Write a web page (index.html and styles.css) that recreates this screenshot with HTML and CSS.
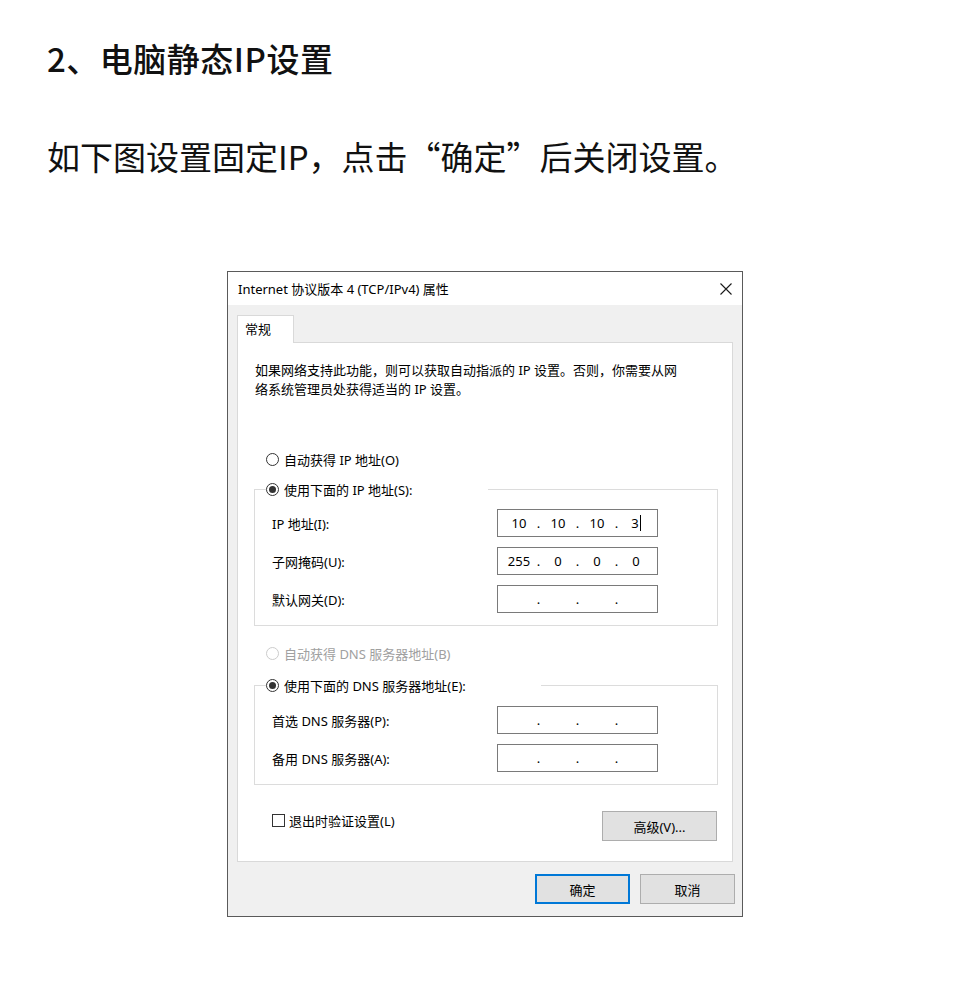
FILE: index.html
```html
<!DOCTYPE html>
<html lang="zh-CN">
<head>
    <meta charset="UTF-8">
    <meta name="viewport" content="width=device-width, initial-scale=1.0">
    <title>电脑静态IP设置</title>
    <link rel="stylesheet" href="styles.css">
</head>
<body>
    <div class="article">
        <h1>2、电脑静态IP设置</h1>
        <p class="lead">如下图设置固定IP，点击“确定”后关闭设置。</p>

        <div class="dialog">
            <div class="titlebar">
                <span class="title">Internet 协议版本 4 (TCP/IPv4) 属性</span>
                <svg class="close" width="12" height="12" viewBox="0 0 12 12">
                    <path d="M0.5 0.5 L11.5 11.5 M11.5 0.5 L0.5 11.5" stroke="#1a1a1a" stroke-width="1.1" fill="none"/>
                </svg>
            </div>
            <div class="dlg-body">
                <div class="tabs">
                    <div class="tab">常规</div>
                </div>
                <div class="panel">
                    <p class="desc">如果网络支持此功能，则可以获取自动指派的 IP 设置。否则，你需要从网<br>络系统管理员处获得适当的 IP 设置。</p>

                    <div class="radio-row first"><span class="radio"></span>自动获得 IP 地址(O)</div>
                    <fieldset class="group">
                        <legend class="legend-ip"><span class="legend-inner"><span class="radio checked"></span>使用下面的 IP 地址(S):</span></legend>
                        <div class="field-row">
                            <span class="field-label">IP 地址(I):</span>
                            <div class="ip-box">
                                <span class="oct">10</span><span class="dot">.</span><span class="oct">10</span><span class="dot">.</span><span class="oct">10</span><span class="dot">.</span><span class="oct"><span class="caret">3</span></span>
                            </div>
                        </div>
                        <div class="field-row">
                            <span class="field-label">子网掩码(U):</span>
                            <div class="ip-box">
                                <span class="oct">255</span><span class="dot">.</span><span class="oct">0</span><span class="dot">.</span><span class="oct">0</span><span class="dot">.</span><span class="oct">0</span>
                            </div>
                        </div>
                        <div class="field-row">
                            <span class="field-label">默认网关(D):</span>
                            <div class="ip-box">
                                <span class="oct"></span><span class="dot">.</span><span class="oct"></span><span class="dot">.</span><span class="oct"></span><span class="dot">.</span><span class="oct"></span>
                            </div>
                        </div>
                    </fieldset>

                    <div class="radio-row disabled"><span class="radio"></span>自动获得 DNS 服务器地址(B)</div>
                    <fieldset class="group group-dns">
                        <legend class="legend-dns"><span class="legend-inner"><span class="radio checked"></span>使用下面的 DNS 服务器地址(E):</span></legend>
                        <div class="field-row">
                            <span class="field-label">首选 DNS 服务器(P):</span>
                            <div class="ip-box">
                                <span class="oct"></span><span class="dot">.</span><span class="oct"></span><span class="dot">.</span><span class="oct"></span><span class="dot">.</span><span class="oct"></span>
                            </div>
                        </div>
                        <div class="field-row">
                            <span class="field-label">备用 DNS 服务器(A):</span>
                            <div class="ip-box">
                                <span class="oct"></span><span class="dot">.</span><span class="oct"></span><span class="dot">.</span><span class="oct"></span><span class="dot">.</span><span class="oct"></span>
                            </div>
                        </div>
                    </fieldset>

                    <div class="options">
                        <div class="check"><span class="box"></span>退出时验证设置(L)</div>
                        <button class="btn btn-adv">高级(V)...</button>
                    </div>
                </div>
                <div class="actions">
                    <button class="btn btn-ok">确定</button>
                    <button class="btn">取消</button>
                </div>
            </div>
        </div>
    </div>
</body>
</html>
```

FILE: styles.css
```css
body {
    margin: 0;
    background: #ffffff;
    color: #111111;
    font-family: "Noto Sans CJK SC", sans-serif;
}
.article {
    padding: 42px 47px 60px;
}
h1 {
    margin: 0;
    font-size: 33px;
    line-height: 33px;
    font-weight: 500;
    letter-spacing: 0.5px;
}
.lead {
    margin: 65px 0 0;
    font-size: 33px;
    line-height: 33px;
}

/* windows style dialog */
.dialog {
    margin: 98px 0 0 180px;
    width: 514px;
    border: 1px solid #5a5a5a;
    background: #f0f0f0;
    font-family: "Noto Sans", "Noto Sans CJK SC", sans-serif;
    font-size: 13px;
    color: #000000;
}
.titlebar {
    height: 33px;
    background: #ffffff;
    display: flex;
    align-items: center;
    justify-content: space-between;
    padding: 0 10px;
}
.dlg-body {
    padding: 10px 9px 12px;
}
.tabs {
    display: flex;
}
.tab {
    position: relative;
    box-sizing: border-box;
    width: 57px;
    height: 28px;
    margin-bottom: -1px;
    padding-left: 7px;
    line-height: 27px;
    background: #ffffff;
    border: 1px solid #d9d9d9;
    border-bottom: none;
}
.panel {
    background: #ffffff;
    border: 1px solid #d9d9d9;
    padding: 18px 14px 20px 16px;
}
.desc {
    margin: 0 0 0 1px;
    line-height: 19px;
}
.radio-row {
    display: flex;
    align-items: center;
    height: 19px;
    margin-left: 12px;
}
.radio-row.first {
    margin-top: 51px;
}
.radio-row.disabled {
    margin-top: 18px;
    color: #a0a0a0;
}
.radio {
    box-sizing: border-box;
    width: 13px;
    height: 13px;
    margin-right: 5px;
    border: 1px solid #333333;
    border-radius: 50%;
    display: inline-flex;
    align-items: center;
    justify-content: center;
    background: #ffffff;
}
.radio-row.disabled .radio {
    border-color: #cccccc;
}
.radio.checked::after {
    content: "";
    width: 7px;
    height: 7px;
    border-radius: 50%;
    background: #333333;
}
.group {
    margin: 11px 0 0;
    padding: 10px 0 12px 17px;
    border: 1px solid #dcdcdc;
    min-width: 0;
}
.group-dns {
    margin-top: 13px;
    padding-top: 11px;
}
.group legend {
    padding: 0;
    margin-left: -6px;
    height: 19px;
}
.legend-ip {
    width: 222px;
}
.legend-dns {
    width: 275px;
}
.legend-inner {
    display: flex;
    align-items: center;
    height: 19px;
}
.field-row {
    display: flex;
    align-items: center;
    height: 28px;
}
.field-row + .field-row {
    margin-top: 10px;
}
.field-label {
    width: 225px;
}
.ip-box {
    box-sizing: border-box;
    width: 161px;
    height: 28px;
    padding-left: 6px;
    border: 1px solid #7a7a7a;
    display: flex;
    align-items: center;
    background: #ffffff;
}
.oct {
    width: 30px;
    text-align: center;
}
.dot {
    width: 9px;
    text-align: center;
}
.caret {
    display: inline-block;
    line-height: 16px;
    padding-right: 1px;
    border-right: 1px solid #000000;
}
.options {
    display: flex;
    justify-content: space-between;
    align-items: flex-start;
    margin-top: 26px;
}
.check {
    display: flex;
    align-items: center;
    height: 19px;
    margin-left: 18px;
}
.box {
    box-sizing: border-box;
    width: 13px;
    height: 13px;
    margin-right: 4px;
    border: 1px solid #333333;
}
.btn {
    box-sizing: border-box;
    width: 95px;
    height: 30px;
    padding: 0;
    background: #e1e1e1;
    border: 1px solid #adadad;
    font: inherit;
    color: #000000;
}
.btn-adv {
    width: 115px;
    margin-right: 1px;
}
.actions {
    display: flex;
    justify-content: flex-end;
    gap: 10px;
    margin-top: 12px;
    margin-right: -2px;
}
.btn-ok {
    border: 2px solid #0078d7;
}
```
